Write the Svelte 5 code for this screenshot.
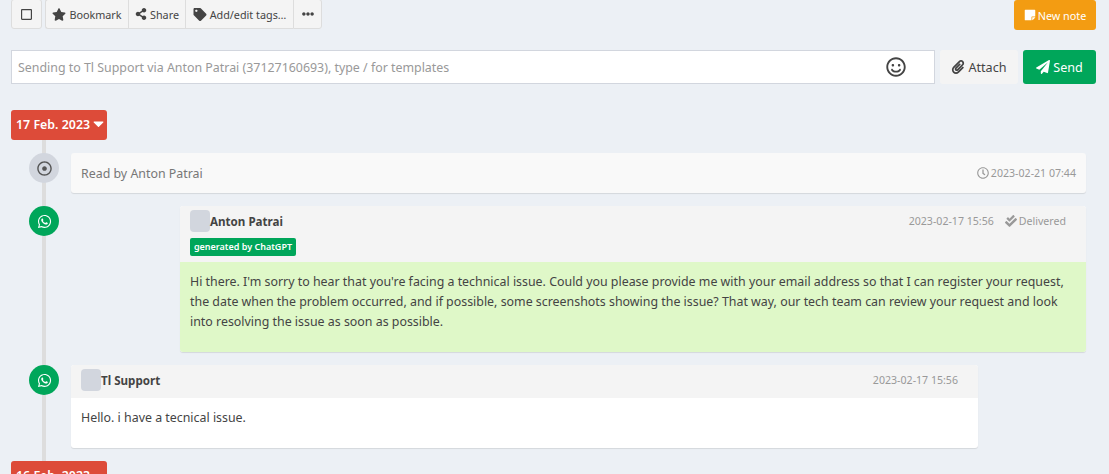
<script lang="ts">
  const icons: Record<string, [number, string]> = {
    square: [448, "M400 32H48C21.5 32 0 53.5 0 80v352c0 26.5 21.5 48 48 48h352c26.5 0 48-21.5 48-48V80c0-26.5-21.5-48-48-48zm-6 400H54c-3.3 0-6-2.7-6-6V86c0-3.3 2.7-6 6-6h340c3.3 0 6 2.7 6 6v340c0 3.3-2.7 6-6 6z"],
    star: [576, "M259.3 17.8L194 150.2 47.9 171.5c-26.2 3.8-36.7 36.1-17.7 54.6l105.7 103-25 145.5c-4.5 26.3 23.2 46 46.4 33.7L288 439.6l130.7 68.7c23.2 12.2 50.9-7.4 46.4-33.7l-25-145.5 105.7-103c19-18.5 8.5-50.8-17.7-54.6L382 150.2 316.7 17.8c-11.7-23.6-45.6-23.9-57.4 0z"],
    share: [448, "M352 320c-22.608 0-43.387 7.819-59.79 20.895l-102.486-64.054a96.551 96.551 0 0 0 0-41.683l102.486-64.054C308.613 184.181 329.392 192 352 192c53.019 0 96-42.981 96-96S405.019 0 352 0s-96 42.981-96 96c0 7.158.79 14.13 2.276 20.841L155.79 180.895C139.387 167.819 118.608 160 96 160c-53.019 0-96 42.981-96 96s42.981 96 96 96c22.608 0 43.387-7.819 59.79-20.895l102.486 64.054A96.301 96.301 0 0 0 256 416c0 53.019 42.981 96 96 96s96-42.981 96-96-42.981-96-96-96z"],
    tag: [512, "M0 252.118V48C0 21.49 21.49 0 48 0h204.118a48 48 0 0 1 33.941 14.059l211.882 211.882c18.745 18.745 18.745 49.137 0 67.882L293.823 497.941c-18.745 18.745-49.137 18.745-67.882 0L14.059 286.059A48 48 0 0 1 0 252.118zM112 64c-26.51 0-48 21.49-48 48s21.49 48 48 48 48-21.49 48-48-21.49-48-48-48z"],
    dots: [512, "M328 256c0 39.8-32.2 72-72 72s-72-32.2-72-72 32.2-72 72-72 72 32.2 72 72zm104-72c-39.8 0-72 32.2-72 72s32.2 72 72 72 72-32.2 72-72-32.2-72-72-72zm-352 0c-39.8 0-72 32.2-72 72s32.2 72 72 72 72-32.2 72-72-32.2-72-72-72z"],
    note: [448, "M312 320h136V56c0-13.3-10.7-24-24-24H24C10.7 32 0 42.7 0 56v400c0 13.3 10.7 24 24 24h264V344c0-13.2 10.8-24 24-24zm129 55l-98 98c-4.5 4.5-10.6 7-17 7h-6V352h128v6.1c0 6.3-2.5 12.4-7 16.9z"],
    clip: [448, "M43.246 466.142c-58.43-60.289-57.341-157.511 1.386-217.581L254.392 34c44.316-45.332 116.351-45.336 160.671 0 43.89 44.894 43.943 117.329 0 162.276L232.214 383.128c-29.855 30.537-78.633 30.111-107.982-.998-28.275-29.97-27.368-77.473 1.452-106.953l143.743-146.835c6.182-6.314 16.312-6.422 22.626-.241l22.861 22.379c6.315 6.182 6.422 16.312.241 22.626L171.427 319.927c-4.932 5.045-5.236 13.428-.648 18.292 4.372 4.634 11.245 4.711 15.688.165l182.849-186.851c19.613-20.062 19.613-52.725-.011-72.798-19.189-19.627-49.957-19.637-69.154 0L90.39 293.295c-34.763 35.56-35.299 93.12-1.191 128.313 34.01 35.093 88.985 35.137 123.058.286l172.06-175.999c6.177-6.319 16.307-6.433 22.626-.256l22.877 22.364c6.319 6.177 6.434 16.307.256 22.626l-172.06 175.998c-59.576 60.938-155.943 60.216-214.77-.485z"],
    plane: [512, "M476 3.2L12.5 270.6c-18.1 10.4-15.8 35.6 2.2 43.2L121 358.4l287.3-253.2c5.5-4.9 13.3 2.6 8.6 8.3L176 407v80.5c0 23.6 28.5 32.9 42.5 15.8L282 426l124.6 52.2c14.2 6 30.4-2.9 33-18.2l72-432C515 7.8 493.3-6.8 476 3.2z"],
    clock: [512, "M256 8C119 8 8 119 8 256s111 248 248 248 248-111 248-248S393 8 256 8zm0 448c-110.5 0-200-89.5-200-200S145.5 56 256 56s200 89.5 200 200-89.5 200-200 200zm61.8-104.4l-84.9-61.7c-3.1-2.3-4.9-5.9-4.9-9.7V116c0-6.6 5.4-12 12-12h32c6.6 0 12 5.4 12 12v141.7l66.8 48.6c5.4 3.9 6.5 11.4 2.6 16.8L334.6 349c-3.9 5.3-11.4 6.5-16.8 2.6z"],
    smile: [496, "M248 8C111 8 0 119 0 256s111 248 248 248 248-111 248-248S385 8 248 8zm0 448c-110.3 0-200-89.7-200-200S137.7 56 248 56s200 89.7 200 200-89.7 200-200 200zm-80-216c17.7 0 32-14.3 32-32s-14.3-32-32-32-32 14.3-32 32 14.3 32 32 32zm160 0c17.7 0 32-14.3 32-32s-14.3-32-32-32-32 14.3-32 32 14.3 32 32 32zm4 72.6c-20.8 25-51.5 39.4-84 39.4s-63.2-14.3-84-39.4c-8.5-10.2-23.7-11.5-33.8-3.1-10.2 8.5-11.5 23.6-3.1 33.8 30 36 74.1 56.6 120.9 56.6s90.9-20.6 120.9-56.6c8.5-10.2 7.1-25.3-3.1-33.8-10.1-8.4-25.3-7.1-33.8 3.1z"],
    dot: [512, "M256 56c110.532 0 200 89.451 200 200 0 110.532-89.451 200-200 200-110.532 0-200-89.451-200-200 0-110.532 89.451-200 200-200m0-48C119.033 8 8 119.033 8 256s111.033 248 248 248 248-111.033 248-248S392.967 8 256 8zm0 168c-44.183 0-80 35.817-80 80s35.817 80 80 80 80-35.817 80-80-35.817-80-80-80z"],
    whatsapp: [448, "M380.9 97.1C339 55.1 283.2 32 223.9 32c-122.4 0-222 99.6-222 222 0 39.1 10.2 77.3 29.6 111L0 480l117.7-30.9c32.4 17.7 68.9 27 106.1 27h.1c122.3 0 224.1-99.6 224.1-222 0-59.3-25.2-115-67.1-157zm-157 341.6c-33.2 0-65.7-8.9-94-25.7l-6.7-4-69.8 18.3L72 359.2l-4.4-7c-18.5-29.4-28.2-63.3-28.2-98.2 0-101.7 82.8-184.5 184.6-184.5 49.3 0 95.6 19.2 130.4 54.1 34.8 34.9 56.2 81.2 56.1 130.5 0 101.8-84.9 184.6-186.6 184.6zm101.2-138.2c-5.5-2.8-32.8-16.2-37.9-18-5.1-1.9-8.8-2.8-12.5 2.8-3.7 5.6-14.3 18-17.6 21.8-3.2 3.7-6.5 4.2-12 1.4-32.6-16.3-54-29.1-75.5-66-5.7-9.8 5.7-9.1 16.3-30.3 1.8-3.7.9-6.9-.5-9.7-1.4-2.8-12.5-30.1-17.1-41.2-4.5-10.8-9.1-9.3-12.5-9.5-3.2-.2-6.9-.2-10.6-.2-3.7 0-9.7 1.4-14.8 6.9-5.1 5.6-19.4 19-19.4 46.3 0 27.3 19.9 53.7 22.6 57.4 2.8 3.7 39.1 59.7 94.8 83.8 35.2 15.2 49 16.5 66.6 13.9 10.7-1.6 32.8-13.4 37.4-26.4 4.6-13 4.6-24.1 3.2-26.4-1.3-2.5-5-3.9-10.5-6.6z"],
    checks: [512, "M505 174.8l-39.6-39.6c-9.4-9.4-24.6-9.4-33.9 0L192 374.7 80.6 263.2c-9.4-9.4-24.6-9.4-33.9 0L7 302.9c-9.4 9.4-9.4 24.6 0 34L175 505c9.4 9.4 24.6 9.4 33.9 0l296-296.2c9.4-9.5 9.4-24.7.1-34zm-324.3 106c6.2 6.3 16.4 6.3 22.6 0l208-208.2c6.2-6.3 6.2-16.4 0-22.6L366.1 4.7c-6.2-6.3-16.4-6.3-22.6 0L192 156.2l-55.4-55.5c-6.2-6.3-16.4-6.3-22.6 0L68.7 146c-6.2 6.3-6.2 16.4 0 22.6l112 112.2z"],
    caret: [320, "M31.3 192h257.3c17.8 0 26.7 21.5 14.1 34.1L174.1 354.8c-7.8 7.8-20.5 7.8-28.3 0L17.2 226.1C4.6 213.5 13.5 192 31.3 192z"],
  };
</script>

{#snippet icon(name: string, cls: string)}
  <svg class="ico {cls}" viewBox="0 0 {icons[name][0]} 512" aria-hidden="true"><path d={icons[name][1]} /></svg>
{/snippet}

<div class="page">
  <div class="toolbar">
    <button class="tool check">{@render icon("square", "i-square")}</button>
    <div class="tool-group">
      <button class="tool bookmark">{@render icon("star", "i-13")}Bookmark</button>
      <button class="tool share">{@render icon("share", "i-12")}Share</button>
      <button class="tool tags">{@render icon("tag", "i-13")}Add/edit tags…</button>
      <button class="tool more">{@render icon("dots", "i-12")}</button>
    </div>
    <button class="new-note">{@render icon("note", "i-12")}New note</button>
  </div>

  <div class="composer">
    <div class="input">
      <span class="placeholder">Sending to Tl Support via Anton Patrai (37127160693), type / for templates</span>
      {@render icon("smile", "i-smile")}
    </div>
    <button class="attach">{@render icon("clip", "i-14")}Attach</button>
    <button class="send">{@render icon("plane", "i-14")}Send</button>
  </div>

  <div class="timeline">
    <div class="date-row">
      <span class="date">17 Feb. 2023 {@render icon("caret", "i-caret")}</span>
    </div>

    <div class="item">
      <span class="dot grey">{@render icon("dot", "i-15")}</span>
      <div class="read-card">
        <span class="read-text">Read by Anton Patrai</span>
        <span class="time">{@render icon("clock", "i-12")}2023-02-21 07:44</span>
      </div>
    </div>

    <div class="item">
      <span class="dot green">{@render icon("whatsapp", "i-15")}</span>
      <div class="msg out">
        <div class="msg-head tall">
          <div class="head-row">
            <span class="avatar"></span>
            <strong>Anton Patrai</strong>
            <span class="meta">2023-02-17 15:56</span>
            <span class="meta status">{@render icon("checks", "i-12")}Delivered</span>
          </div>
          <span class="badge">generated by ChatGPT</span>
        </div>
        <div class="msg-body green-body">
          Hi there. I'm sorry to hear that you're facing a technical issue. Could you please provide me with your email address so that I can register your request, the date when the problem occurred, and if possible, some screenshots showing the issue? That way, our tech team can review your request and look into resolving the issue as soon as possible.
        </div>
      </div>
    </div>

    <div class="item">
      <span class="dot green">{@render icon("whatsapp", "i-15")}</span>
      <div class="msg in">
        <div class="msg-head">
          <div class="head-row">
            <span class="avatar"></span>
            <strong>Tl Support</strong>
            <span class="meta">2023-02-17 15:56</span>
          </div>
        </div>
        <div class="msg-body white-body">Hello. i have a tecnical issue.</div>
      </div>
    </div>

    <div class="date-row">
      <span class="date">16 Feb. 2023</span>
    </div>
  </div>
</div>

<style>
  :global(body) {
    margin: 0;
    background: #ecf0f5;
    overflow: hidden;
  }

  .page {
    height: 474px;
    overflow: hidden;
    padding: 0 13px 0 11px;
    color: #444;
    font-family: "Noto Sans", "Liberation Sans", sans-serif;
    font-size: 12.4px;
    box-sizing: border-box;
  }

  button {
    font: inherit;
    box-sizing: border-box;
    cursor: pointer;
  }

  .ico {
    display: inline-block;
    fill: currentColor;
    flex: none;
  }

  .i-square { height: 13px; width: 11px; }
  .i-12 { height: 12px; width: 12px; }
  .i-13 { height: 13px; width: 14px; }
  .i-14 { height: 14px; width: 14px; }
  .i-15 { height: 15px; width: 15px; }
  .i-smile { height: 20px; width: 20px; color: #444; }
  .i-caret { height: 17px; width: 11px; vertical-align: -3px; }

  .toolbar {
    display: flex;
    align-items: flex-start;
    gap: 3px;
    height: 30px;
  }

  .tool {
    display: flex;
    align-items: center;
    justify-content: center;
    height: 30px;
    margin-top: -1px;
    gap: 3px;
    padding: 0;
    border: 1px solid #ddd;
    background: #f4f4f4;
    color: #444;
    font-size: 10.8px;
  }

  .check {
    width: 31px;
    border-radius: 3px;
  }

  .tool-group {
    display: flex;
  }

  .tool-group .tool {
    border-right-width: 0;
  }

  .bookmark { width: 83px; border-radius: 3px 0 0 3px; }
  .share { width: 57px; }
  .tags { width: 108px; }
  .tool-group .more { width: 29px; border-right-width: 1px; border-radius: 0 3px 3px 0; }

  .new-note {
    display: flex;
    align-items: center;
    justify-content: center;
    gap: 2px;
    width: 82px;
    height: 30px;
    margin-left: auto;
    padding: 0;
    border: 0;
    border-radius: 3px;
    background: #f39c12;
    color: #fff;
    font-size: 10.8px;
  }

  .composer {
    display: flex;
    align-items: center;
    margin-top: 20px;
    height: 34px;
  }

  .input {
    display: flex;
    align-items: center;
    justify-content: space-between;
    box-sizing: border-box;
    width: 924px;
    height: 34px;
    padding: 0 28px 0 6px;
    border: 1px solid #d2d6de;
    background: #fff;
  }

  .placeholder {
    color: #999;
    font-size: 12.4px;
  }

  .attach,
  .send {
    display: flex;
    align-items: center;
    justify-content: center;
    gap: 3px;
    height: 34px;
    padding: 0;
    border: 0;
    border-radius: 3px;
    font-size: 12.6px;
  }

  .attach {
    width: 78px;
    margin-left: 5px;
    background: #f4f4f4;
    color: #444;
  }

  .send {
    width: 73px;
    margin-left: 5px;
    background: #00a65a;
    color: #fff;
  }

  .timeline {
    position: relative;
    margin-top: 26px;
  }

  /* vertical rail behind the date labels and dots */
  .timeline::before {
    content: "";
    position: absolute;
    top: 0;
    bottom: 0;
    left: 31px;
    width: 4px;
    background: #ddd;
  }

  .date-row {
    position: relative;
    display: flex;
    margin-bottom: 13px;
  }

  .date {
    display: block;
    box-sizing: border-box;
    width: 96px;
    height: 30px;
    padding-left: 5px;
    border-radius: 3px;
    background: #dd4b39;
    color: #fff;
    font-size: 12.4px;
    font-weight: 600;
    line-height: 30px;
    white-space: nowrap;
  }

  .item {
    position: relative;
    display: flex;
    align-items: flex-start;
    gap: 12px;
    margin: 0 10px 13px 18px;
  }

  .dot {
    display: flex;
    flex: none;
    align-items: center;
    justify-content: center;
    width: 30px;
    height: 30px;
    border-radius: 50%;
  }

  .dot.grey {
    background: #d2d6de;
    color: #555;
  }

  .dot.green {
    background: #00a65a;
    color: #fff;
  }

  .read-card {
    display: flex;
    flex: 1;
    align-items: center;
    justify-content: space-between;
    height: 40px;
    padding: 0 10px;
    border-radius: 3px;
    background: #f9f9f9;
    box-shadow: 0 1px 1px rgba(0, 0, 0, 0.1);
  }

  .read-text {
    color: #777;
  }

  .time {
    display: flex;
    align-items: center;
    gap: 2px;
    color: #999;
    font-size: 10.6px;
  }

  .msg {
    border-radius: 3px;
    background: #fff;
    box-shadow: 0 1px 1px rgba(0, 0, 0, 0.1);
    overflow: hidden;
  }

  .msg.out {
    flex: 1;
    margin-left: 109px;
  }

  .msg.in {
    width: 907px;
  }

  .msg-head {
    box-sizing: border-box;
    height: 33px;
    padding: 4px 20px 0 10px;
    background: #f4f4f4;
  }

  .msg-head.tall {
    height: 56px;
  }

  .head-row {
    display: flex;
    align-items: center;
    height: 22px;
  }

  .avatar {
    width: 20px;
    height: 22px;
    border-radius: 4px;
    background: #d2d6de;
  }

  .head-row strong {
    flex: 1;
    font-size: 11.6px;
    font-weight: 700;
  }

  .meta {
    color: #999;
    font-size: 10.6px;
  }

  .status {
    display: flex;
    align-items: center;
    gap: 2px;
    margin-left: 11px;
  }

  .badge {
    display: block;
    box-sizing: border-box;
    width: 106px;
    height: 18px;
    margin-top: 6px;
    border-radius: 2px;
    background: #00a65a;
    color: #fff;
    font-size: 9px;
    font-weight: 600;
    line-height: 18px;
    text-align: center;
    white-space: nowrap;
  }

  .msg-body {
    box-sizing: border-box;
    padding: 10px;
    line-height: 20px;
    color: #444;
  }

  .green-body {
    height: 90px;
    background: #dff8c8;
  }

  .white-body {
    height: 50px;
  }
</style>
